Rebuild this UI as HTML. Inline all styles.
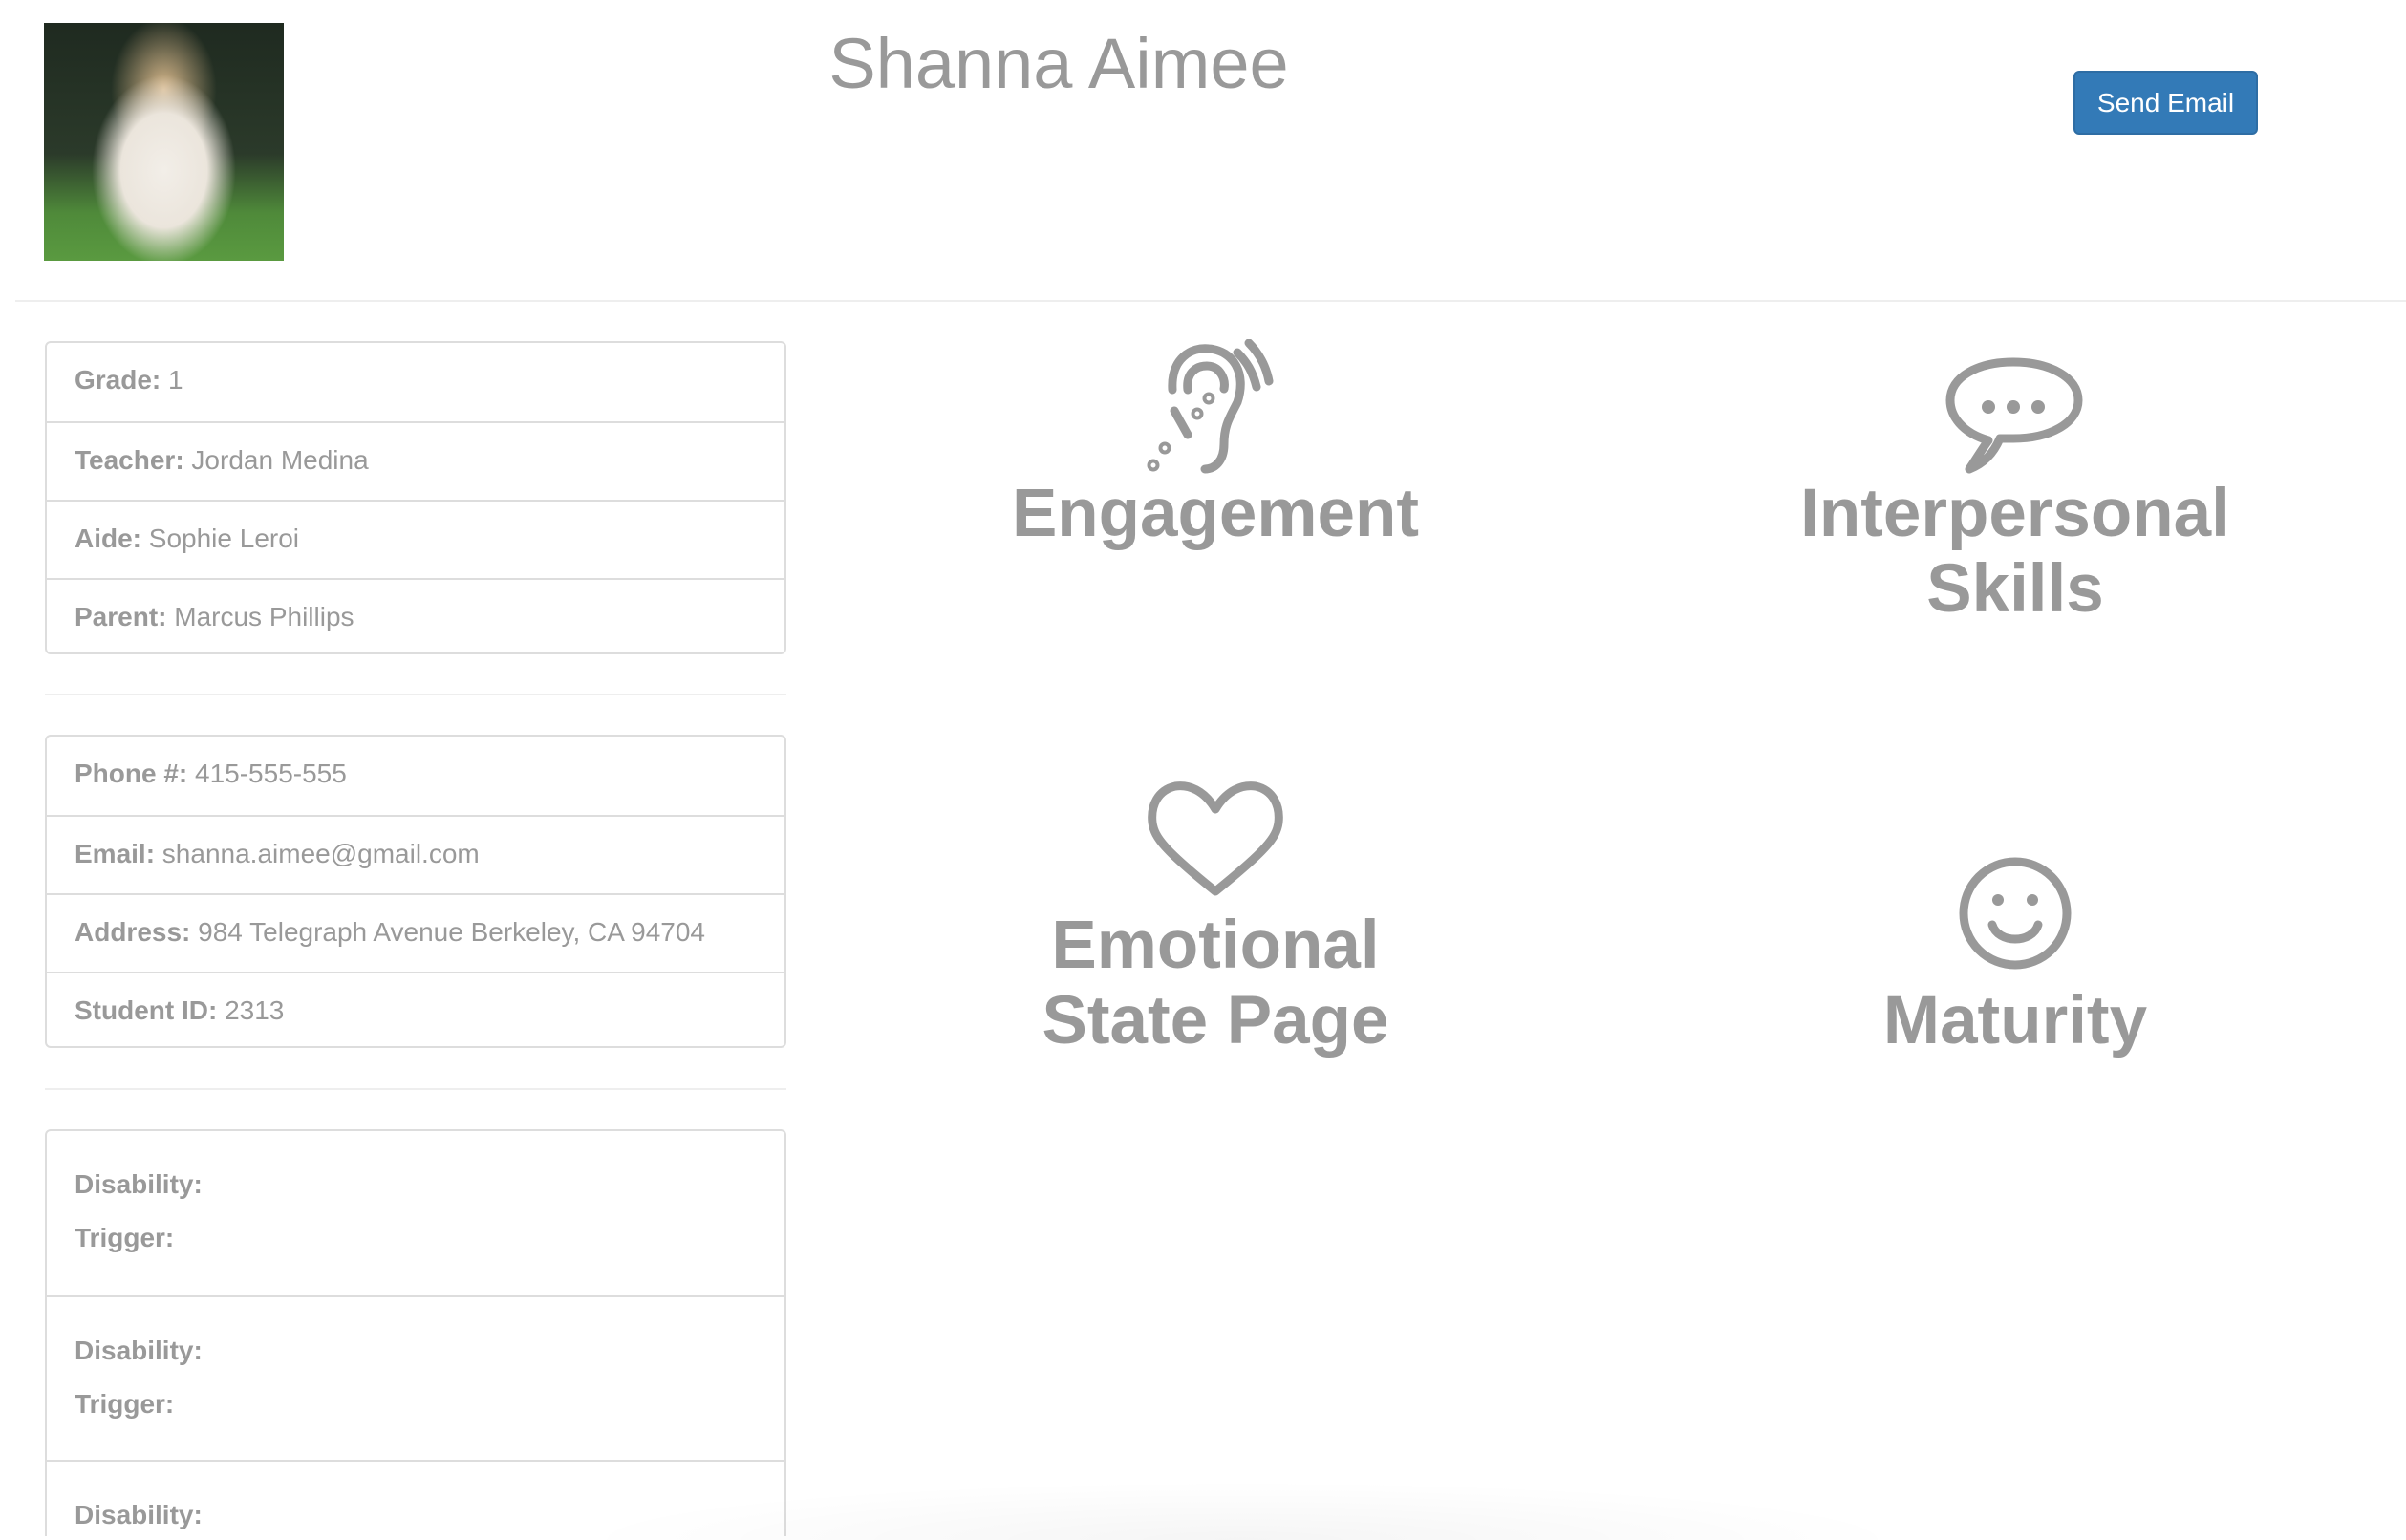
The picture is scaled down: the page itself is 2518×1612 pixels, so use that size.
<!DOCTYPE html>
<html style="overflow:hidden;height:1612px"><head><meta charset="utf-8"><style>
*{box-sizing:border-box;margin:0;padding:0}
body{width:2518px;height:1612px;overflow:hidden;background:#fff;font-family:"Liberation Sans",Arial,sans-serif;color:#999;position:relative}
.abs{position:absolute}
.photo{left:46px;top:24px;width:251px;height:249px;background:radial-gradient(ellipse 30% 40% at 50% 62%,#f2eee8 0%,#ebe5dc 60%,rgba(0,0,0,0) 100%),radial-gradient(ellipse 22% 30% at 50% 28%,#d9b98c 0%,rgba(0,0,0,0) 100%),linear-gradient(#1f2a20 0%,#2b3a2a 55%,#4f8a3a 80%,#5a9a40 100%)}
h1{position:absolute;left:0;width:2216px;top:24px;text-align:center;font-size:74px;font-weight:normal;color:#999}
.btn{left:2170px;top:74px;width:193px;height:67px;background:#337ab7;border:2px solid #2e6da4;border-radius:6px;color:#fff;font-size:28px;text-align:center;line-height:63px}
.hr{height:2px;background:#eee}
.lg{left:47px;width:776px;border:2px solid #ddd;border-radius:6px}
.lg div{height:82px;border-top:2px solid #ddd;padding-left:29px;font-size:28px;line-height:78px;color:#999}
.lg div:first-child{border-top:none}
.lg3{overflow:hidden;border-bottom:none;border-radius:6px 6px 0 0}
.lg3 div{height:172px;line-height:normal;padding-top:40px}
.lg3 div p{margin-bottom:24px}
.tile{position:absolute;text-align:center;font-size:71px;line-height:79px;font-weight:bold;color:#999;width:800px}
</style></head><body>
<div class="abs photo"></div>
<h1>Shanna Aimee</h1>
<div class="abs btn">Send Email</div>
<div class="abs hr" style="left:16px;right:0;top:314px"></div>

<div class="abs lg" style="top:357px;height:328px">
<div><b>Grade:</b> 1</div>
<div><b>Teacher:</b> Jordan Medina</div>
<div><b>Aide:</b> Sophie Leroi</div>
<div><b>Parent:</b> Marcus Phillips</div>
</div>
<div class="abs hr" style="left:47px;width:776px;top:726px"></div>
<div class="abs lg" style="top:769px;height:328px">
<div><b>Phone #:</b> 415-555-555</div>
<div><b>Email:</b> shanna.aimee@gmail.com</div>
<div><b>Address:</b> 984 Telegraph Avenue Berkeley, CA 94704</div>
<div><b>Student ID:</b> 2313</div>
</div>
<div class="abs hr" style="left:47px;width:776px;top:1139px"></div>
<div class="abs lg lg3" style="top:1182px;height:426px">
<div><p><b>Disability:</b></p><p><b>Trigger:</b></p></div>
<div><p><b>Disability:</b></p><p><b>Trigger:</b></p></div>
<div><p><b>Disability:</b></p></div>
</div>

<svg class="abs" style="left:1195px;top:355px" width="150" height="142" viewBox="0 0 150 142" fill="none" stroke="#999" stroke-width="9" stroke-linecap="round">
<path d="M32 53 C30 20 52 8 70 10 C96 12 110 36 100 66 C92 82 86 90 86 110 C86 128 76 136 66 136"/>
<path d="M48 53 C46 36 56 28 68 28 C82 28 88 42 86 52"/>
<path d="M100 14 C110 24 116 34 120 50"/>
<path d="M112 4 C122 14 130 28 133 44"/>
<circle cx="70" cy="62" r="2"/><circle cx="58" cy="78" r="2"/>
<path d="M34 75 L48 100"/>
<circle cx="24" cy="114" r="2"/><circle cx="12" cy="132" r="2"/>
</svg>
<div class="tile" style="left:872px;top:498px">Engagement</div>

<svg class="abs" style="left:2035px;top:373px" width="146" height="124" viewBox="0 0 146 124" fill="none" stroke="#999" stroke-width="9">
<path d="M46 88 C18 80 6 62 6 46 C6 22 34 6 72 6 C110 6 140 22 140 46 C140 70 110 86 72 86 C68 86 62 86 58 86 C52 100 42 112 26 118 C34 106 40 96 46 88 Z" stroke-linejoin="round"/>
<circle cx="46" cy="53" r="7" fill="#999" stroke="none"/><circle cx="72" cy="53" r="7" fill="#999" stroke="none"/><circle cx="98" cy="53" r="7" fill="#999" stroke="none"/>
</svg>
<div class="tile" style="left:1709px;top:498px">Interpersonal<br>Skills</div>

<svg class="abs" style="left:1200px;top:817px" width="144" height="122" viewBox="0 0 144 122" fill="none" stroke="#999" stroke-width="9" stroke-linejoin="round">
<path d="M72 30 C60 10 44 4 30 6 C12 10 4 26 6 44 C8 60 20 74 72 116 C124 74 136 60 138 44 C140 26 132 10 114 6 C100 4 84 10 72 30 Z"/>
</svg>
<div class="tile" style="left:872px;top:950px">Emotional<br>State Page</div>

<svg class="abs" style="left:2049px;top:896px" width="120" height="120" viewBox="0 0 120 120" fill="none" stroke="#999" stroke-width="9" stroke-linecap="round">
<circle cx="60" cy="60" r="54"/>
<circle cx="42" cy="46" r="6" fill="#999" stroke="none"/><circle cx="78" cy="46" r="6" fill="#999" stroke="none"/>
<path d="M36 72 C42 92 78 92 84 72"/>
</svg>
<div class="tile" style="left:1709px;top:1029px">Maturity</div>

<div class="abs" style="left:600px;width:1400px;top:1550px;height:62px;background:radial-gradient(ellipse 50% 100% at 50% 100%,rgba(0,0,0,0.04),rgba(0,0,0,0))"></div>
</body></html>
